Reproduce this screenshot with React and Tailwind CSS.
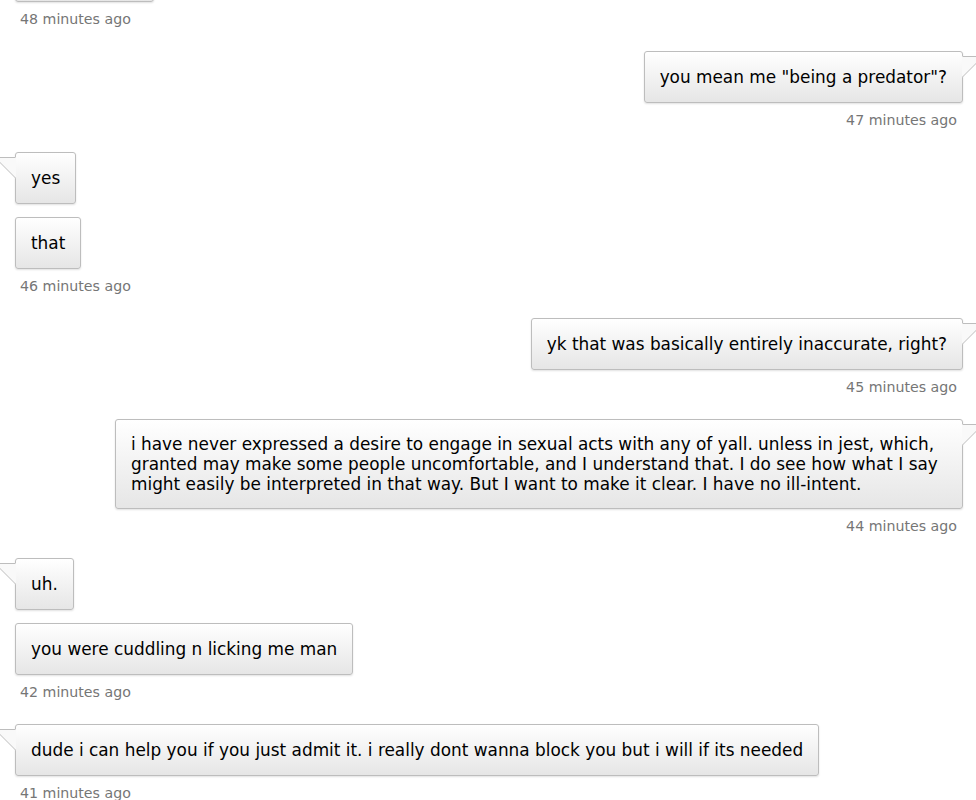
import React from "react";

const groups = [
  { side: "left", time: "48 minutes ago", msgs: [{ text: "", stub: true }] },
  { side: "right", time: "47 minutes ago", msgs: [{ text: 'you mean me "being a predator"?' }] },
  { side: "left", time: "46 minutes ago", msgs: [{ text: "yes" }, { text: "that" }] },
  { side: "right", time: "45 minutes ago", msgs: [{ text: "yk that was basically entirely inaccurate, right?" }] },
  {
    side: "right",
    time: "44 minutes ago",
    msgs: [
      {
        long: true,
        text: "i have never expressed a desire to engage in sexual acts with any of yall. unless in jest, which, granted may make some people uncomfortable, and I understand that. I do see how what I say might easily be interpreted in that way. But I want to make it clear. I have no ill-intent.",
      },
    ],
  },
  { side: "left", time: "42 minutes ago", msgs: [{ text: "uh." }, { text: "you were cuddling n licking me man" }] },
  {
    side: "left",
    time: "41 minutes ago",
    msgs: [{ text: "dude i can help you if you just admit it. i really dont wanna block you but i will if its needed" }],
  },
];

function Tail({ side }) {
  if (side === "right") {
    return (
      <svg className="absolute top-[4px] right-[-21px]" width="21" height="22" viewBox="0 0 21 22">
        <polygon points="0,0.5 21,0.5 0,21.5" fill="#f9f9f9" />
        <line x1="1" y1="0.5" x2="21" y2="0.5" stroke="#bdbdbd" strokeWidth="1" />
        <line x1="21" y1="0.5" x2="0.5" y2="21" stroke="#bdbdbd" strokeWidth="1" />
      </svg>
    );
  }
  return (
    <svg className="absolute top-[4px] left-[-21px]" width="21" height="22" viewBox="0 0 21 22">
      <polygon points="21,0.5 0,0.5 21,21.5" fill="#f9f9f9" />
      <line x1="0" y1="0.5" x2="20" y2="0.5" stroke="#bdbdbd" strokeWidth="1" />
      <line x1="0" y1="0.5" x2="20.5" y2="21" stroke="#bdbdbd" strokeWidth="1" />
    </svg>
  );
}

function Bubble({ side, tail, text, stub, long }) {
  return (
    <div
      className={
        (side === "right" ? "self-end mr-[13px]" : "self-start ml-[15px]") +
        (stub ? " w-[139px] h-[52px] mt-[-50px]" : "") +
        (long ? " py-[14px]" : " py-[15px]") +
        " relative max-w-[848px] rounded-[3px] border border-[#bdbdbd] bg-gradient-to-b from-white to-[#e6e6e6] px-[15px] text-[16.9px] leading-[20px] text-black shadow-[0_1px_2px_rgba(0,0,0,0.12)]"
      }
    >
      {tail && <Tail side={side} />}
      {text}
    </div>
  );
}

export default function App() {
  return (
    <div className="min-h-[800px] overflow-hidden bg-white font-[family-name:DejaVu_Sans,Verdana,sans-serif]">
      <div className="flex flex-col gap-[22px]">
        {groups.map((g, i) => (
          <div key={i} className="flex flex-col">
            <div className="flex flex-col gap-[13px]">
              {g.msgs.map((m, j) => (
                <Bubble key={j} side={g.side} tail={j === 0 && !m.stub} text={m.text} stub={m.stub} long={m.long} />
              ))}
            </div>
            <div
              className={
                (g.side === "right" ? "self-end pr-[19px]" : "self-start pl-[20px]") +
                " mt-[7px] text-[14.2px] leading-[20px] text-[#767676]"
              }
            >
              {g.time}
            </div>
          </div>
        ))}
      </div>
    </div>
  );
}
